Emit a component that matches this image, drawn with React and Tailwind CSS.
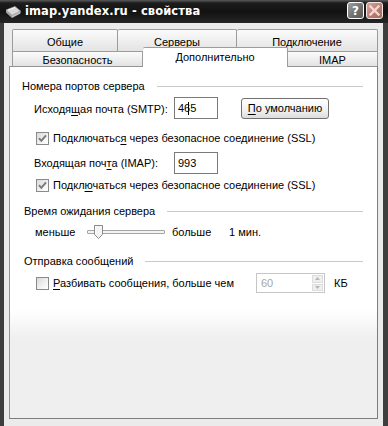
import React from "react";

function Check({ checked }) {
  return (
    <span className="w-[13px] h-[13px] shrink-0 border border-[#8a8a8a] bg-[linear-gradient(135deg,#d9d9d9,#f7f7f7_70%,#ffffff)] flex items-center justify-center">
      {checked && (
        <svg width="9" height="9" viewBox="0 0 9 9">
          <path d="M1 4.2 L3.3 6.8 L8 1.4" stroke="#7a7a7a" strokeWidth="2" fill="none" />
        </svg>
      )}
    </span>
  );
}

function Header({ children, pl }) {
  return (
    <div className={`h-[14px] flex items-center pr-[14px] ${pl}`}>
      <span className="whitespace-nowrap">{children}</span>
      <div className="flex-1 ml-[12px] h-px bg-[#c9c9c9]" />
    </div>
  );
}

export default function App() {
  return (
    <div className="w-[388px] h-[426px] overflow-hidden flex flex-col bg-[#e9e9e9] font-['Liberation_Sans','Arial',sans-serif] text-[11px] text-black leading-none">
      {/* Title bar */}
      <div className="h-[23px] shrink-0 flex items-center bg-[linear-gradient(to_bottom,#5a5a5a_0px,#1c1c1c_3px,#121212_12px,#262626_100%)] pl-[5px] pr-[5px]">
        <svg width="17" height="14" viewBox="0 0 17 14" className="shrink-0">
          <path d="M1 5 L10 1.5 L15.5 6 L7 10.5 Z" fill="#d8d8d8" stroke="#9a9a9a" strokeWidth="0.8" />
          <path d="M1 5 L7 10.5 L7 13 L1 7.5 Z" fill="#a9a9a9" />
          <path d="M7 10.5 L15.5 6 L15.5 8.5 L7 13 Z" fill="#bdbdbd" />
          <path d="M3 5 L10 2.5" stroke="#ffffff" strokeWidth="0.8" />
        </svg>
        <span className="ml-[3px] font-['DejaVu_Sans',sans-serif] font-bold text-[11.5px] text-white tracking-[0.1px] whitespace-nowrap">
          imap.yandex.ru - свойства
        </span>
        <div className="flex-1" />
        <div className="w-[17px] h-[17px] mb-[2px] rounded-[3px] border border-white bg-[linear-gradient(135deg,#a0a0a0,#6e6e6e_60%,#5a5a5a)] flex items-center justify-center font-['DejaVu_Sans',sans-serif] font-bold text-[12px] text-white">
          ?
        </div>
        <div className="ml-[2px] w-[17px] h-[17px] mb-[2px] rounded-[3px] border border-[#f3e6e4] bg-[linear-gradient(135deg,#d7a59d,#b47a70_60%,#a56a60)] flex items-center justify-center">
          <svg width="11" height="11" viewBox="0 0 11 11">
            <path d="M1.5 1.5 L9.5 9.5 M9.5 1.5 L1.5 9.5" stroke="#f6d6cf" strokeWidth="2.4" strokeLinecap="square" />
          </svg>
        </div>
      </div>

      {/* Body */}
      <div className="flex-1 flex flex-col border-l-[4px] border-r-[5px] border-[#3e3e3e] bg-[#ebebeb] pl-[5px] pr-[5px] pt-[6px]">
        {/* Tabs */}
        <div className="ml-[3px] w-[366px] flex flex-col">
          <div className="h-[22px] flex">
            <div className="w-[106px] h-full pt-[4px] flex items-center justify-center border-t border-l border-r border-[#9c9c9c] rounded-t-[2px] bg-[linear-gradient(to_bottom,#fbfbfb,#e3e3e3)]">
              Общие
            </div>
            <div className="w-[119px] h-full pt-[4px] flex items-center justify-center border-t border-r border-[#9c9c9c] rounded-t-[2px] bg-[linear-gradient(to_bottom,#fbfbfb,#e3e3e3)]">
              Серверы
            </div>
            <div className="w-[141px] h-full pt-[4px] flex items-center justify-center border-t border-r border-[#9c9c9c] rounded-t-[2px] bg-[linear-gradient(to_bottom,#fbfbfb,#e3e3e3)]">
              Подключение
            </div>
          </div>
          <div className="h-[15px] flex items-end">
            <div className="w-[131px] h-full pt-[2px] flex items-center justify-center border-t border-l border-r border-[#9c9c9c] bg-[linear-gradient(to_bottom,#fbfbfb,#e3e3e3)]">
              Безопасность
            </div>
            <div className="relative z-10 w-[145px] h-[20px] -mb-px pb-[1px] flex items-center justify-center border-t border-r border-[#9c9c9c] rounded-t-[2px] bg-white">
              Дополнительно
            </div>
            <div className="w-[90px] h-full pt-[2px] flex items-center justify-center border-t border-r border-[#9c9c9c] bg-[linear-gradient(to_bottom,#fbfbfb,#e3e3e3)]">
              IMAP
            </div>
          </div>
        </div>

        {/* Panel */}
        <div className="h-[353px] w-[369px] flex flex-col border border-[#939393] border-r-[#7d7d7d] border-b-[#7d7d7d] bg-[linear-gradient(to_bottom,#ffffff_0px,#ffffff_243px,#efefef_272px,#efefef_100%)]">
          <div className="mt-[12px]">
            <Header pl="pl-[12px]">Номера портов сервера</Header>
          </div>

          <div className="mt-[4px] h-[22px] flex items-center pl-[24px]">
            <span className="w-[140px] pt-[2px] whitespace-nowrap">
              Исходя<span className="underline underline-offset-2">щ</span>ая почта (SMTP):
            </span>
            <div className="w-[44px] h-[22px] border border-[#7b7b7b] bg-white flex items-center pl-[3px]">
              <span>46</span>
              <span className="inline-block w-px h-[13px] bg-black -ml-[2px] mr-[1px]" />
              <span>5</span>
            </div>
            <div className="ml-[23px] w-[88px] h-[21px] rounded-[3px] border border-[#707070] bg-[linear-gradient(to_bottom,#ffffff,#f1f1f1_60%,#dcdcdc)] flex items-center justify-center">
              <span className="underline underline-offset-2">П</span>о умолчанию
            </div>
          </div>

          <div className="mt-[12px] h-[15px] flex items-center pl-[26px]">
            <Check checked />
            <span className="ml-[4px] whitespace-nowrap">
              Подключатьс<span className="underline underline-offset-2">я</span> через безопасное соединение (SSL)
            </span>
          </div>

          <div className="mt-[6px] h-[22px] flex items-center pl-[24px]">
            <span className="w-[140px] whitespace-nowrap">
              Входящая поч<span className="underline underline-offset-2">т</span>а (IMAP):
            </span>
            <div className="w-[44px] h-[22px] border border-[#7b7b7b] bg-white flex items-center pl-[3px]">
              993
            </div>
          </div>

          <div className="mt-[4px] h-[15px] flex items-center pl-[26px]">
            <Check checked />
            <span className="ml-[4px] whitespace-nowrap">
              Подкл<span className="underline underline-offset-2">ю</span>чаться через безопасное соединение (SSL)
            </span>
          </div>

          <div className="mt-[11px]">
            <Header pl="pl-[14px]">Время ожидания сервера</Header>
          </div>

          <div className="mt-[6px] h-[16px] flex items-center pl-[25px]">
            <span className="w-[52px]">меньше</span>
            <div className="relative w-[78px] h-[16px] flex items-center">
              <div className="w-full h-[4px] border border-[#a5a5a5] rounded-[1px] bg-[#f3f3f3]" />
              <svg className="absolute left-[7px] top-[1px]" width="9" height="14" viewBox="0 0 9 14">
                <path d="M0.5 0.5 H8.5 V9.5 L4.5 13.5 L0.5 9.5 Z" fill="#f4f4f4" stroke="#8a8a8a" />
                <path d="M1.5 1.5 V9" stroke="#ffffff" />
              </svg>
            </div>
            <span className="ml-[7px] w-[57px]">больше</span>
            <span>1 мин.</span>
          </div>

          <div className="mt-[14px]">
            <Header pl="pl-[14px]">Отправка сообщений</Header>
          </div>

          <div className="mt-[5px] h-[20px] flex items-center pl-[26px]">
            <Check />
            <span className="ml-[4px] w-[203px] whitespace-nowrap">
              <span className="underline underline-offset-2">Р</span>азбивать сообщения, больше чем
            </span>
            <div className="w-[69px] h-[20px] border border-[#c6c6c6] bg-white flex items-center">
              <span className="flex-1 pl-[4px] text-[#a6a6a6]">60</span>
              <div className="w-[13px] h-full flex flex-col p-px gap-px">
                <div className="flex-1 bg-[#efefef] border border-[#dcdcdc] flex items-center justify-center">
                  <svg width="5" height="3" viewBox="0 0 5 3"><path d="M0 3 L2.5 0 L5 3 Z" fill="#b5b5b5" /></svg>
                </div>
                <div className="flex-1 bg-[#efefef] border border-[#dcdcdc] flex items-center justify-center">
                  <svg width="5" height="3" viewBox="0 0 5 3"><path d="M0 0 L2.5 3 L5 0 Z" fill="#b5b5b5" /></svg>
                </div>
              </div>
            </div>
            <span className="ml-[9px]">КБ</span>
          </div>
        </div>
      </div>
    </div>
  );
}
